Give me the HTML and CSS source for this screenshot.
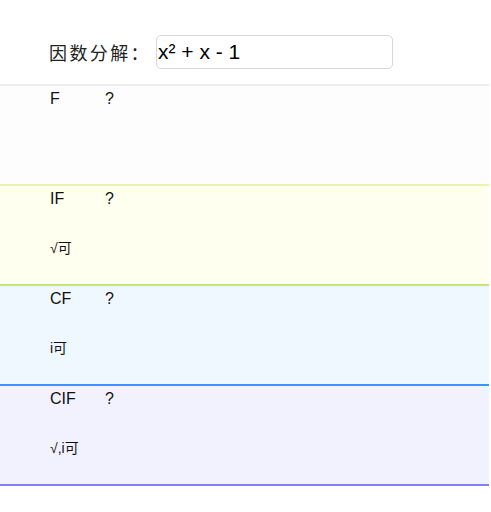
FILE: index.html
```html
<!DOCTYPE html>
<html>
<head>
<meta charset="utf-8">
<link rel="stylesheet" href="styles.css">
</head>
<body>
<header class="head">
  <label class="prompt">因数分解：</label>
  <input class="expr" type="text" value="x² + x - 1">
</header>
<section class="block block-f">
  <div class="row"><span class="name">F</span><span class="val">?</span></div>
  <div class="note"></div>
</section>
<section class="block block-if">
  <div class="row"><span class="name">IF</span><span class="val">?</span></div>
  <div class="note">√可</div>
</section>
<section class="block block-cf">
  <div class="row"><span class="name">CF</span><span class="val">?</span></div>
  <div class="note">i可</div>
</section>
<section class="block block-cif">
  <div class="row"><span class="name">CIF</span><span class="val">?</span></div>
  <div class="note">√,i可</div>
</section>
</body>
</html>
```
FILE: styles.css
```css
html, body {
  margin: 0;
  padding: 0;
  background: #ffffff;
}
body {
  width: 489px;
  font-family: "Liberation Sans", Arial, sans-serif;
  color: #111;
}
.head {
  height: 86px;
  display: flex;
  align-items: center;
  padding: 20px 0 0 49px;
  box-sizing: border-box;
  border-bottom: 2px solid #eeeeee;
}
.prompt {
  font-family: "Noto Sans CJK SC", serif;
  font-size: 18px;
  letter-spacing: 2.4px;
  color: #222;
}
.expr {
  margin-left: 5px;
  width: 237px;
  height: 34px;
  box-sizing: border-box;
  border: 1px solid #d8d8d8;
  border-radius: 5px;
  padding: 0 1px;
  font-family: "Liberation Sans", Arial, sans-serif;
  font-size: 21px;
  color: #000;
  background: #fff;
  outline: none;
}
.block {
  height: 100px;
  box-sizing: border-box;
  padding: 3px 0 0 50px;
  border-bottom: 2px solid;
}
.row {
  display: flex;
  font-size: 16px;
  line-height: 20px;
}
.name {
  width: 55px;
}
.note {
  margin-top: 29px;
  font-size: 14px;
  line-height: 20px;
  font-family: "Liberation Sans", "Noto Sans CJK SC", sans-serif;
}
.block-f { background: #fdfdfd; border-color: #eef0b0; }
.block-if { background: #fffff0; border-color: #c4e47c; }
.block-cf { background: #f0f8ff; border-color: #4090ff; }
.block-cif { background: #f2f2ff; border-color: #8080ff; }
```
